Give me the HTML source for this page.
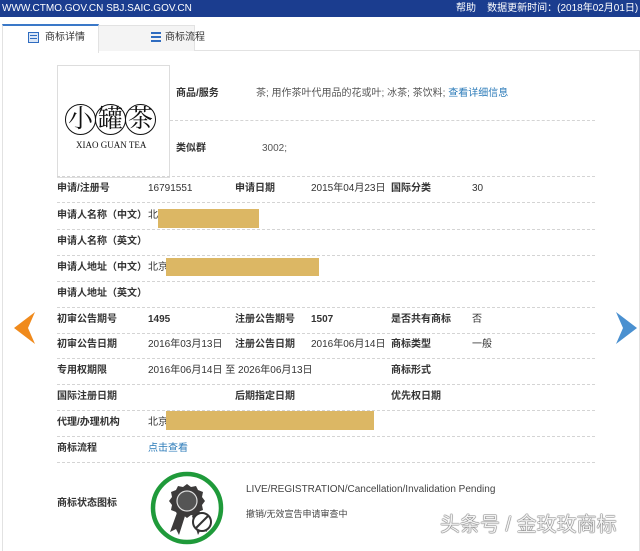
<!DOCTYPE html>
<html><head><meta charset="utf-8"><style>
body{margin:0;width:640px;height:546px;background:#fff;position:relative;overflow:hidden;font-family:"Liberation Sans","Noto Sans CJK SC",sans-serif;font-size:10px;color:#333}
.a{position:absolute;white-space:nowrap;line-height:12px}
.l{position:absolute;left:57px;width:538px;border-top:1px dashed #d4d4d4;height:0}
.b{font-weight:bold;color:#333}
.y{position:absolute;background:#dcb764}
.lk{color:#2a7ab8}
.c{display:inline-block;width:29px;height:29px;border:1.5px solid #111;border-radius:50%;text-align:center;line-height:29px;margin-right:-1px}
</style></head><body>
<div style="position:absolute;left:0;top:0;width:640px;height:17px;background:#1b3d8f"></div>
<div class="a" style="left:2px;top:3px;color:#fff;font-size:10px">WWW.CTMO.GOV.CN SBJ.SAIC.GOV.CN</div>
<div class="a" style="left:456px;top:3px;color:#fff">帮助&nbsp;&nbsp;&nbsp;&nbsp;数据更新时间：(2018年02月01日)</div>
<div style="position:absolute;left:2px;top:50px;width:636px;height:500px;border:1px solid #e2e2e2;border-bottom:none"></div>
<div style="position:absolute;left:97px;top:25px;width:96px;height:25px;background:#f4f4f4;border:1px solid #e2e2e2;border-bottom:none"></div>
<div style="position:absolute;left:2px;top:24px;width:95px;height:27px;background:#fff;border:1px solid #e2e2e2;border-top:2px solid #3a78c8;border-bottom:none"></div>
<div style="position:absolute;left:28px;top:32px;width:9px;height:9px;border:1px solid #2f6cc0;background:#dbe7f7"></div>
<div style="position:absolute;left:30px;top:35px;width:7px;height:1px;background:#2f6cc0;box-shadow:0 3px 0 #2f6cc0"></div>
<div class="a" style="left:45px;top:32px">商标详情</div>
<div style="position:absolute;left:151px;top:32px;width:10px;height:10px;background:linear-gradient(#2f6cc0 0 2px,transparent 2px 4px,#2f6cc0 4px 6px,transparent 6px 8px,#2f6cc0 8px 10px)"></div>
<div class="a" style="left:165px;top:32px">商标流程</div>

<div style="position:absolute;left:57px;top:65px;width:111px;height:111px;border:1px solid #ddd"></div>
<div class="a" style="left:65px;top:104px;font-family:'Liberation Serif','Noto Serif CJK SC',serif;font-size:25px;line-height:32px;color:#111">
<span class="c">小</span><span class="c">罐</span><span class="c">茶</span></div>
<div class="a" style="left:76px;top:139px;font-family:'Liberation Serif',serif;font-size:9px;color:#111">XIAO GUAN TEA</div>

<div class="a b" style="left:176px;top:88px">商品/服务</div>
<div class="a" style="left:256px;top:88px;color:#555">茶; 用作茶叶代用品的花或叶; 冰茶; 茶饮料; <span class="lk">查看详细信息</span></div>
<div style="position:absolute;left:170px;top:120px;width:425px;border-top:1px dashed #d4d4d4"></div>
<div class="a b" style="left:176px;top:143px">类似群</div>
<div class="a" style="left:262px;top:143px;color:#555">3002;</div>

<div class="l" style="top:176px"></div>
<div class="a b" style="left:57px;top:183px">申请/注册号</div><div class="a" style="left:148px;top:183px">16791551</div>
<div class="a b" style="left:235px;top:183px">申请日期</div><div class="a" style="left:311px;top:183px">2015年04月23日</div>
<div class="a b" style="left:391px;top:183px">国际分类</div><div class="a" style="left:472px;top:183px">30</div>
<div class="l" style="top:202px"></div>
<div class="a b" style="left:57px;top:210px">申请人名称（中文）</div><div class="a" style="left:148px;top:210px">北</div>
<div class="y" style="left:158px;top:209px;width:101px;height:19px"></div>
<div class="l" style="top:229px"></div>
<div class="a b" style="left:57px;top:236px">申请人名称（英文）</div>
<div class="l" style="top:255px"></div>
<div class="a b" style="left:57px;top:262px">申请人地址（中文）</div><div class="a" style="left:148px;top:262px">北京</div>
<div class="y" style="left:166px;top:258px;width:153px;height:18px"></div>
<div class="l" style="top:281px"></div>
<div class="a b" style="left:57px;top:288px">申请人地址（英文）</div>
<div class="l" style="top:307px"></div>
<div class="a b" style="left:57px;top:314px">初审公告期号</div><div class="a b" style="left:148px;top:314px">1495</div>
<div class="a b" style="left:235px;top:314px">注册公告期号</div><div class="a b" style="left:311px;top:314px">1507</div>
<div class="a b" style="left:391px;top:314px">是否共有商标</div><div class="a" style="left:472px;top:314px">否</div>
<div class="l" style="top:333px"></div>
<div class="a b" style="left:57px;top:339px">初审公告日期</div><div class="a" style="left:148px;top:339px">2016年03月13日</div>
<div class="a b" style="left:235px;top:339px">注册公告日期</div><div class="a" style="left:311px;top:339px">2016年06月14日</div>
<div class="a b" style="left:391px;top:339px">商标类型</div><div class="a" style="left:472px;top:339px">一般</div>
<div class="l" style="top:358px"></div>
<div class="a b" style="left:57px;top:365px">专用权期限</div><div class="a" style="left:148px;top:365px">2016年06月14日 至 2026年06月13日</div>
<div class="a b" style="left:391px;top:365px">商标形式</div>
<div class="l" style="top:384px"></div>
<div class="a b" style="left:57px;top:391px">国际注册日期</div>
<div class="a b" style="left:235px;top:391px">后期指定日期</div>
<div class="a b" style="left:391px;top:391px">优先权日期</div>
<div class="l" style="top:410px"></div>
<div class="a b" style="left:57px;top:417px">代理/办理机构</div><div class="a" style="left:148px;top:417px">北京</div>
<div class="y" style="left:166px;top:411px;width:208px;height:19px"></div>
<div class="l" style="top:436px"></div>
<div class="a b" style="left:57px;top:443px">商标流程</div><div class="a lk" style="left:148px;top:443px">点击查看</div>
<div class="l" style="top:462px"></div>
<div class="a b" style="left:57px;top:498px">商标状态图标</div>
<svg style="position:absolute;left:148px;top:470px" width="80" height="76" viewBox="0 0 80 76">
<circle cx="39" cy="38" r="34" fill="#fff" stroke="#1f9a3a" stroke-width="4.5"/>
<path d="M30 40 L22 62 L28 59 L31 65 L37 46 Z M44 46 L50 65 L53 59 L59 62 L51 40 Z" fill="#3c3a3a"/>
<path d="M39 14 l4 3 5-1 2 4 5 2 -1 5 3 4 -3 4 1 5 -5 2 -2 4 -5 -1 -4 3 -4 -3 -5 1 -2 -4 -5 -2 1 -5 -3 -4 3 -4 -1 -5 5 -2 2 -4 5 1 z" fill="#3c3a3a"/>
<circle cx="39" cy="31" r="10" fill="#555" stroke="#ddd" stroke-width="1.2"/>
<circle cx="54" cy="52" r="9" fill="#fff" stroke="#333" stroke-width="2"/>
<line x1="48" y1="58" x2="60" y2="46" stroke="#333" stroke-width="2"/>
</svg>
<div class="a" style="left:246px;top:484px;color:#444">LIVE/REGISTRATION/Cancellation/Invalidation Pending</div>
<div class="a" style="left:246px;top:508px;color:#444;font-size:9px">撤销/无效宣告申请审查中</div>
<div class="a" style="left:440px;top:513px;font-size:20px;line-height:24px;color:#f4f4f4;text-shadow:0 0 1px #555,0 0 1px #555,0 0 1px #555">头条号 / 金玫玫商标</div>
<svg style="position:absolute;left:14px;top:312px" width="22" height="32"><path d="M21 0 L0 16 L21 32 L14 16 Z" fill="#f08a1c"/></svg>
<svg style="position:absolute;left:616px;top:312px" width="22" height="32"><path d="M0 0 L21 16 L0 32 L7 16 Z" fill="#4a90d0"/></svg>
</body></html>
